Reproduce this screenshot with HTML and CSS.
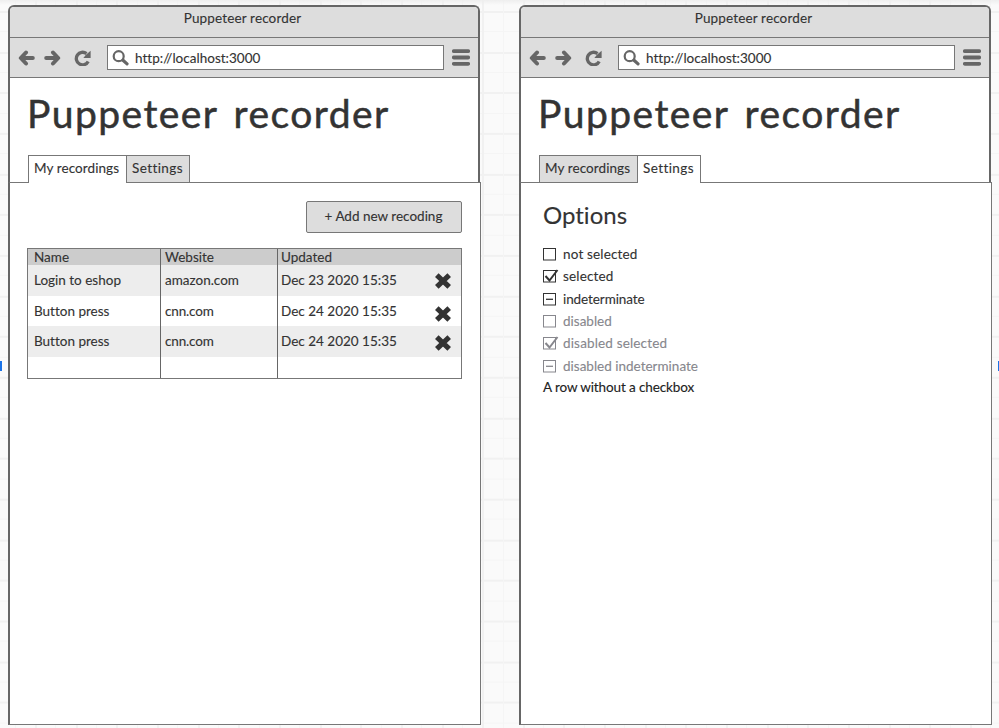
FILE: index.html
```
<!DOCTYPE html>
<html lang="en">
<head>
<meta charset="utf-8">
<title>Puppeteer recorder</title>
<link rel="stylesheet" href="styles.css">
</head>
<body>
<svg class="defs" width="0" height="0">
  <symbol id="arrow" viewBox="0 0 17 16"><path d="M8 2.500 2.800 8 8 13.500M3.500 8h11.300" fill="none" stroke="#666" stroke-width="4" stroke-linecap="round" stroke-linejoin="round"/></symbol>
  <symbol id="reload" viewBox="0 0 17 16"><path d="M14.200 11.500A6.300 6.300 0 1 1 12.500 3.600" fill="none" stroke="#666" stroke-width="3.300"/><path d="M16.600.8v7.200H9.400l2.300-3z" fill="#666"/></symbol>
  <symbol id="search" viewBox="0 0 17 16"><circle cx="6.700" cy="6.200" r="5" fill="none" stroke="#666" stroke-width="2.200"/><path d="m11 10.300 4 3.600" stroke="#666" stroke-width="3.200" stroke-linecap="round"/></symbol>
  <symbol id="menu" viewBox="0 0 18 17"><path d="M1.800 2.200h14.400M1.800 8.500h14.400M1.800 14.800h14.400" stroke="#666" stroke-width="3.800" stroke-linecap="round"/></symbol>
  <symbol id="cross" viewBox="0 0 18 18"><path d="m2.800 3.200 12.400 11.600m0-11.600L2.800 14.800" stroke="#333" stroke-width="5.200"/></symbol>
  <symbol id="box" viewBox="0 0 16 16"><rect x=".5" y="2.500" width="12" height="11.500" fill="#fff" stroke="currentColor"/></symbol>
  <symbol id="checked" viewBox="0 0 16 16"><rect x=".5" y="2.500" width="12" height="11.500" fill="#fff" stroke="currentColor"/><path d="m2.500 8 4 4.500L14.500 2" fill="none" stroke="currentColor" stroke-width="2"/></symbol>
  <symbol id="mixed" viewBox="0 0 16 16"><rect x=".5" y="2.500" width="12" height="11.500" fill="#fff" stroke="currentColor"/><path d="M3 8.300h7" stroke="currentColor" stroke-width="1.300"/></symbol>
</svg>
<main class="canvas">
  <section class="window">
    <div class="frame">
      <header class="titlebar">Puppeteer recorder</header>
      <nav class="toolbar">
        <svg class="back"><use href="#arrow"/></svg><svg class="forward"><use href="#arrow"/></svg><svg class="reload"><use href="#reload"/></svg>
        <div class="address"><svg><use href="#search"/></svg><span class="url">http://localhost:3000</span></div>
        <svg class="menu"><use href="#menu"/></svg>
      </nav>
      <h1>Puppeteer recorder</h1>
      <div class="tabs"><div class="tab first active">My recordings</div><div class="tab second">Settings</div></div>
    </div>
    <div class="panel recordings">
      <button class="add">+ Add new recoding</button>
      <div class="table">
        <div class="row head"><div>Name</div><div>Website</div><div>Updated</div></div>
        <div class="row odd"><div>Login to eshop</div><div>amazon.com</div><div>Dec 23 2020 15:35<svg><use href="#cross"/></svg></div></div>
        <div class="row"><div>Button press</div><div class="short">cnn.com</div><div>Dec 24 2020 15:35<svg class="low"><use href="#cross"/></svg></div></div>
        <div class="row odd"><div>Button press</div><div class="short">cnn.com</div><div>Dec 24 2020 15:35<svg class="last"><use href="#cross"/></svg></div></div>
        <div class="row empty"><div></div><div></div><div></div></div>
      </div>
    </div>
  </section>
  <section class="window">
    <div class="frame">
      <header class="titlebar">Puppeteer recorder</header>
      <nav class="toolbar">
        <svg class="back"><use href="#arrow"/></svg><svg class="forward"><use href="#arrow"/></svg><svg class="reload"><use href="#reload"/></svg>
        <div class="address"><svg><use href="#search"/></svg><span class="url">http://localhost:3000</span></div>
        <svg class="menu"><use href="#menu"/></svg>
      </nav>
      <h1>Puppeteer recorder</h1>
      <div class="tabs"><div class="tab first">My recordings</div><div class="tab second active">Settings</div></div>
    </div>
    <div class="panel options">
      <h2>Options</h2>
      <div class="option wide"><svg><use href="#box"/></svg><span>not selected</span></div>
      <div class="option wide"><svg><use href="#checked"/></svg><span>selected</span></div>
      <div class="option narrow"><svg><use href="#mixed"/></svg><span>indeterminate</span></div>
      <div class="option disabled"><svg><use href="#box"/></svg><span>disabled</span></div>
      <div class="option disabled wide"><svg><use href="#checked"/></svg><span>disabled selected</span></div>
      <div class="option disabled"><svg><use href="#mixed"/></svg><span>disabled indeterminate</span></div>
      <p>A row without a checkbox</p>
    </div>
  </section>
  <i class="handle left"></i><i class="handle right"></i>
</main>
</body>
</html>
```
FILE: styles.css
```
* { box-sizing: border-box; }
body {
  margin: 0;
  color: #333;
  font: 13.5px/18px Lato, "Liberation Sans", sans-serif;
  font-variant-ligatures: none;
  -webkit-text-stroke: .12px;
}
.defs { position: absolute; }
svg { display: block; flex: none; }
.canvas {
  position: relative;
  display: flex;
  gap: 38px;
  width: 999px;
  height: 728px;
  padding: 5px 0 0 8px;
  overflow: hidden;
  background:
    linear-gradient(#eee, transparent 5px),
    repeating-linear-gradient(90deg, #f1f1f1 0 2px, transparent 2px 20.320px, #f5f5f5 20.320px 21.320px, transparent 21.320px 40.640px) -5.500px 0 / 1016px 728px,
    repeating-linear-gradient(#f1f1f1 0 2px, transparent 2px 20.320px, #f5f5f5 20.320px 21.320px, transparent 21.320px 40.640px) 0 11px / 999px 731.520px,
    #fafafa;
}
.window { width: 473px; flex: none; }
.frame {
  width: 472px;
  height: 177px;
  border: 2px solid #666;
  border-bottom: 0;
  border-radius: 6px 6px 0 0;
  background: #fff;
}
.titlebar {
  height: 30px;
  padding: 2px 3px 0 0;
  text-align: center;
  letter-spacing: .14px;
  background: #ddd;
  border-radius: 4px 4px 0 0;
}
.toolbar {
  display: flex;
  align-items: center;
  height: 41px;
  padding-left: 8px;
  background: #ddd;
  border: solid #777;
  border-width: 1px 0;
}
.toolbar > svg { width: 17px; height: 16px; }
.toolbar .forward { margin-left: 9px; transform: scaleX(-1); }
.toolbar .reload { margin: 0 16px 0 13px; }
.address {
  display: flex;
  align-items: center;
  width: 337px;
  height: 25px;
  padding-left: 4px;
  border: 1px solid #777;
  background: #fff;
}
.address svg { width: 17px; height: 16px; margin-right: 6px; }
.url { letter-spacing: .02px; }
.toolbar .menu { width: 18px; height: 17px; margin-left: 8px; }
h1 {
  margin: 11px 0 0 17px;
  font-size: 39px;
  line-height: 48px;
  font-weight: 400;
  letter-spacing: 1.45px;
  word-spacing: 4.500px;
  white-space: nowrap;
  -webkit-text-stroke: .5px;
}
.tabs { display: flex; margin: 18px 0 0 18px; height: 28px; }
.tab {
  height: 27px;
  padding: 3px 0 0 5px;
  border: 1px solid #777;
  border-bottom: 0;
  background: #ddd;
  white-space: nowrap;
}
.tab.first { width: 99px; letter-spacing: .08px; }
.tab.second { width: 64px; margin-left: -1px; letter-spacing: .4px; }
.tab.active { position: relative; height: 28px; background: #fff; }
.panel {
  height: 543px;
  border: 1px solid #777;
  border-left: 2px solid #666;
  background: #fff;
}
.add {
  display: block;
  width: 156px;
  height: 32px;
  margin: 18px 0 0 296px;
  padding: 0 1px 3px 0;
  border: 1px solid #777;
  border-radius: 2px;
  background: #ddd;
  color: #333;
  font: inherit;
}
.table { width: 435px; margin: 15px 0 0 17px; border: 1px solid #777; }
.row { display: grid; grid-template-columns: 132px 117px 184px; height: 30.500px; }
.row > div {
  display: flex;
  align-items: center;
  padding-left: 3px;
  border-left: 1px solid #666;
  white-space: nowrap;
}
.row > div:first-child { padding-left: 6px; border: 0; }
.row > div:nth-child(2) { padding-left: 4px; }
.row > .short { letter-spacing: -.15px; }
.row.head { height: 16px; line-height: 16px; background: #ccc; }
.row.odd { background: #ededed; }
.row.empty { height: 21.500px; }
.row svg { width: 18px; height: 18px; margin: 2px 9px 0 auto; }
.row svg.low { margin-top: 6px; }
.row svg.last { margin-top: 4px; }
.options { padding-top: 1px; }
h2 {
  margin: 17px 0 15px 22px;
  font-size: 24px;
  line-height: 27px;
  font-weight: 400;
}
.option { display: flex; align-items: center; height: 22.300px; padding-left: 22px; }
.option.wide { letter-spacing: .16px; }
.option.narrow { letter-spacing: -.09px; }
.option.disabled { color: #87878d; }
.option svg { width: 16px; height: 16px; margin-right: 4px; }
p { margin: 1px 0 0 22px; letter-spacing: -.11px; color: #222; }
.handle { position: absolute; top: 361px; width: 2px; height: 10px; background: #1a73e8; }
.left { left: 0; }
.right { right: 0; width: 1px; }
```
